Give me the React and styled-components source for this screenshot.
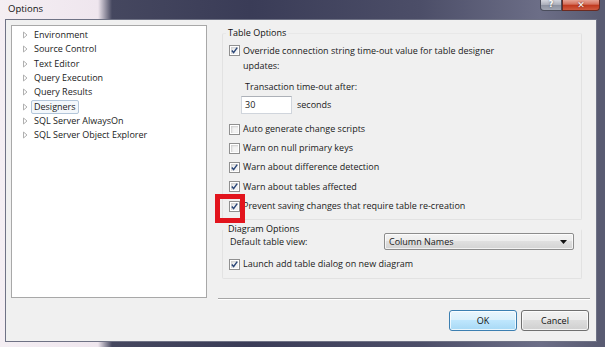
import React from 'react';
import styled, { createGlobalStyle } from 'styled-components';

const treeItems = [
  'Environment',
  'Source Control',
  'Text Editor',
  'Query Execution',
  'Query Results',
  'Designers',
  'SQL Server AlwaysOn',
  'SQL Server Object Explorer'
];

const tableChecks = [
  { label: 'Auto generate change scripts', checked: false, gap: 8 },
  { label: 'Warn on null primary keys', checked: false, gap: 5 },
  { label: 'Warn about difference detection', checked: true, gap: 5 },
  { label: 'Warn about tables affected', checked: true, gap: 5.5 },
  { label: 'Prevent saving changes that require table re-creation', checked: true, gap: 5.5, marked: true }
];

const GlobalStyle = createGlobalStyle`
  html, body {
    margin: 0;
    padding: 0;
  }
  body {
    font-family: "Open Sans", "Liberation Sans", sans-serif;
    font-size: 9px;
    color: #1a1a1a;
  }
`;

const Window = styled.div`
  width: 605px;
  height: 347px;
  display: flex;
  flex-direction: column;
  overflow: hidden;
  background: linear-gradient(to right,
    #f4eef3 0, #efe6ee 98px, #45475f 112px, #3a3c57 250px,
    #4c4e68 420px, #6c6e87 540px, #595b72 600px);
`;

const TitleBar = styled.div`
  height: 19px;
  flex-shrink: 0;
  display: flex;
  align-items: flex-start;
`;

const Title = styled.div`
  margin: 3px 0 0 8px;
  font-size: 9.5px;
  line-height: 12px;
  color: #111;
`;

const CaptionButtons = styled.div`
  margin-left: auto;
  margin-right: 5px;
  display: flex;
`;

const CaptionButton = styled.div`
  width: ${p => (p.$close ? 38 : 22)}px;
  height: 11px;
  box-sizing: border-box;
  border: 1px solid ${p => (p.$close ? '#6b2a20' : '#4a4d5c')};
  border-top: none;
  border-radius: ${p => (p.$close ? '0 0 4px 0' : '0 0 0 4px')};
  display: flex;
  align-items: center;
  justify-content: center;
  color: #fff;
  font-family: "DejaVu Sans", sans-serif;
  font-weight: bold;
  font-size: ${p => (p.$close ? 9 : 8)}px;
  line-height: 1;
  text-shadow: 0 0 2px rgba(0, 0, 0, 0.6);
  background: ${p => (p.$close
    ? 'linear-gradient(#e6a495, #d6735f 40%, #c13b20 55%, #d05b40)'
    : 'linear-gradient(#d4d6de, #adb1bc 45%, #8e93a1 55%, #a1a6b3)')};
`;

const Client = styled.div`
  flex: 1;
  margin: 0 8px 5px 5px;
  padding: 5px 6px 0 5px;
  background: #f0f0f0;
  border: 1px solid #6f7285;
  display: flex;
  gap: 11px;
`;

const Tree = styled.div`
  width: 196px;
  height: 273px;
  flex-shrink: 0;
  box-sizing: border-box;
  padding: 2px 0 0 11px;
  background: #fff;
  border: 1px solid #a8a8a8;
`;

const TreeRow = styled.div`
  height: 14.3px;
  display: flex;
  align-items: center;
  gap: 2px;
`;

const TreeLabel = styled.span`
  padding: 0 2px;
  line-height: 12px;
  border: 1px solid ${p => (p.$selected ? '#b3c6da' : 'transparent')};
  border-radius: 2px;
  background: ${p => (p.$selected ? '#f3f7fb' : 'transparent')};
  white-space: nowrap;
`;

const RightColumn = styled.div`
  flex: 1;
  display: flex;
  flex-direction: column;
`;

const Group = styled.fieldset`
  margin: ${p => p.$top}px 8px 0 4px;
  padding: 0 7px ${p => p.$bottom}px 6px;
  border: 1px solid #e2e2e2;
  border-top-color: ${p => (p.$noTop ? 'transparent' : '#e8e8e8')};
  border-radius: 2px;
  min-width: 0;
`;

const Legend = styled.legend`
  margin-left: -3px;
  padding: 0 2px;
  line-height: ${p => p.$lh}px;
  color: #111;
`;

const CheckRow = styled.label`
  display: flex;
  align-items: flex-start;
  gap: 3px;
  margin-top: ${p => p.$gap}px;
  line-height: ${p => p.$lh || 14}px;
  white-space: nowrap;
  max-width: ${p => (p.$wrap ? `${p.$wrap}px` : 'none')};
  & > span {
    white-space: ${p => (p.$wrap ? 'normal' : 'nowrap')};
  }
`;

const Box = styled.span`
  position: relative;
  flex-shrink: 0;
  width: 11px;
  height: 11px;
  margin-top: ${p => ((p.$lh || 14) - 11) / 2}px;
  box-sizing: border-box;
  border: 1px solid #909090;
  background: #f4f4f4;
  box-shadow: inset 0 0 0 1px #fff, inset 1px 1px 2px 1px #cdcdcd;
  display: flex;
  align-items: center;
  justify-content: center;

  ${p => p.$marked && `
    &::after {
      content: '';
      position: absolute;
      left: -15px;
      top: -8px;
      width: 30px;
      height: 29px;
      box-sizing: border-box;
      border: 5px solid #e2141d;
    }
  `}
`;

const Indented = styled.div`
  margin-left: ${p => p.$indent}px;
  margin-top: ${p => p.$gap}px;
  line-height: 14px;
  display: flex;
  align-items: center;
  gap: 5px;
`;

const TextBox = styled.div`
  width: 51px;
  height: 18px;
  box-sizing: border-box;
  padding-left: 3px;
  background: #fff;
  border: 1px solid #d0d5dc;
  border-top-color: #adb1b8;
  display: flex;
  align-items: center;
`;

const ViewRow = styled.div`
  margin-top: -1px;
  display: flex;
  align-items: center;
  justify-content: space-between;
  padding-left: 1px;
`;

const Select = styled.div`
  width: 190px;
  height: 17px;
  box-sizing: border-box;
  padding: 0 6px 0 4px;
  border: 1px solid #8c8c8c;
  border-radius: 2px;
  background: linear-gradient(#f3f3f3, #ececec 50%, #dfdfdf 50%, #d3d3d3);
  box-shadow: inset 0 0 0 1px rgba(255, 255, 255, 0.7);
  display: flex;
  align-items: center;
  justify-content: space-between;
`;

const Separator = styled.div`
  margin-top: 19px;
  border-top: 1px solid #a6a6a6;
  border-bottom: 1px solid #fff;
`;

const ButtonRow = styled.div`
  margin-top: 10px;
  padding-right: 1px;
  display: flex;
  justify-content: flex-end;
  gap: 4px;
`;

const Button = styled.button`
  width: 68px;
  height: 21px;
  padding: 0;
  font: inherit;
  color: #111;
  border-radius: 3px;
  border: 1px solid ${p => (p.$default ? '#3c7fb1' : '#707070')};
  background: ${p => (p.$default
    ? 'linear-gradient(#eaf6fd, #d9f0fc 50%, #bee6fd 50%, #a7d9f5)'
    : 'linear-gradient(#f2f2f2, #ebebeb 50%, #dddddd 50%, #cfcfcf)')};
  box-shadow: inset 0 0 0 1px rgba(255, 255, 255, 0.75);
`;

function Arrow() {
  return (
    <svg width="6" height="8" viewBox="0 0 6 8">
      <polygon points="0.5,1 4,4 0.5,7" fill="none" stroke="#b0b0b0" strokeWidth="1" />
    </svg>
  );
}

function CheckBox({ checked, marked, lh }) {
  return (
    <Box $marked={marked} $lh={lh}>
      {checked && (
        <svg width="9" height="9" viewBox="0 0 9 9">
          <path d="M1.8 4.6 L3.6 6.6 L7.2 1.6" fill="none" stroke="#2b4778" strokeWidth="1.5" />
        </svg>
      )}
    </Box>
  );
}

export default function App() {
  return (
    <>
      <GlobalStyle />
      <Window>
        <TitleBar>
          <Title>Options</Title>
          <CaptionButtons>
            <CaptionButton>?</CaptionButton>
            <CaptionButton $close>✕</CaptionButton>
          </CaptionButtons>
        </TitleBar>
        <Client>
          <Tree>
            {treeItems.map(name => (
              <TreeRow key={name}>
                <Arrow />
                <TreeLabel $selected={name === 'Designers'}>{name}</TreeLabel>
              </TreeRow>
            ))}
          </Tree>
          <RightColumn>
            <Group $top={2} $bottom={6}>
              <Legend $lh={12}>Table Options</Legend>
              <CheckRow $gap={4} $lh={15} $wrap={270}>
                <CheckBox checked lh={15} />
                <span>Override connection string time-out value for table designer updates:</span>
              </CheckRow>
              <Indented $indent={16} $gap={7}>Transaction time-out after:</Indented>
              <Indented $indent={12} $gap={2}>
                <TextBox>30</TextBox>
                seconds
              </Indented>
              {tableChecks.map(({ label, checked, gap, marked }) => (
                <CheckRow key={label} $gap={gap}>
                  <CheckBox checked={checked} marked={marked} />
                  <span>{label}</span>
                </CheckRow>
              ))}
            </Group>
            <Group $top={4} $bottom={7} $noTop>
              <Legend $lh={10}>Diagram Options</Legend>
              <ViewRow>
                <span>Default table view:</span>
                <Select>
                  <span>Column Names</span>
                  <svg width="7" height="4" viewBox="0 0 7 4">
                    <polygon points="0,0 7,0 3.5,4" fill="#111" />
                  </svg>
                </Select>
              </ViewRow>
              <CheckRow $gap={7}>
                <CheckBox checked />
                <span>Launch add table dialog on new diagram</span>
              </CheckRow>
            </Group>
            <Separator />
            <ButtonRow>
              <Button $default>OK</Button>
              <Button>Cancel</Button>
            </ButtonRow>
          </RightColumn>
        </Client>
      </Window>
    </>
  );
}
